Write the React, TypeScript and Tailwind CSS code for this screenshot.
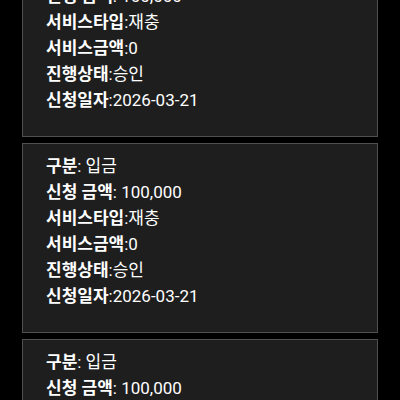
import React from "react";

interface Deposit {
  kind: string;
  amount: string;
  serviceType: string;
  serviceAmount: string;
  status: string;
  date: string;
}

const deposits: Deposit[] = [
  { kind: "입금", amount: "100,000", serviceType: "재충", serviceAmount: "0", status: "승인", date: "2026-03-21" },
  { kind: "입금", amount: "100,000", serviceType: "재충", serviceAmount: "0", status: "승인", date: "2026-03-21" },
  { kind: "입금", amount: "100,000", serviceType: "재충", serviceAmount: "0", status: "승인", date: "2026-03-21" },
];

const Row = ({ label, value, spaced }: { label: string; value: string; spaced?: boolean }) => (
  <p className="h-[26px] leading-[26px]">
    <span className="font-bold">{label}</span>
    {spaced ? `: ${value}` : `:${value}`}
  </p>
);

const App = () => {
  return (
    <div
      className="min-h-screen bg-black overflow-hidden h-[400px]"
      style={{ fontFamily: "Roboto, 'Noto Sans CJK KR', sans-serif" }}
    >
      <div className="flex flex-col gap-[6px] px-[22px] mt-[-53px]">
        {deposits.map((d, i) => (
          <div
            key={i}
            className="border border-[#505050] bg-[#1e1e1e] pl-[23px] pt-[9px] pb-[23px] text-[17px] text-white"
          >
            <Row label="구분" value={d.kind} spaced />
            <Row label="신청 금액" value={d.amount} spaced />
            <Row label="서비스타입" value={d.serviceType} />
            <Row label="서비스금액" value={d.serviceAmount} />
            <Row label="진행상태" value={d.status} />
            <Row label="신청일자" value={d.date} />
          </div>
        ))}
      </div>
    </div>
  );
};

export default App;
